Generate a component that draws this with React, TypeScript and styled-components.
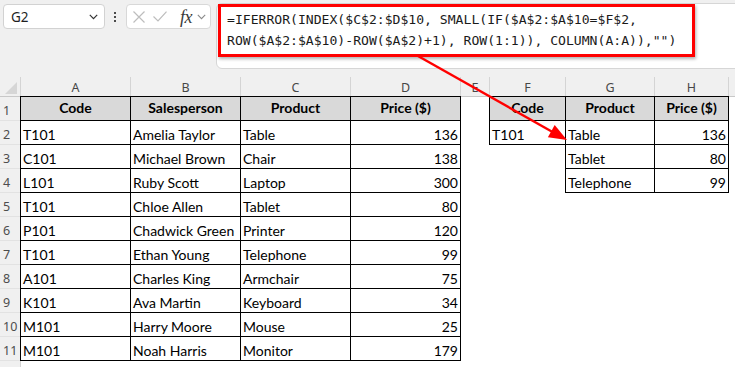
import React from "react";
import styled, { createGlobalStyle } from "styled-components";

const GlobalStyle = createGlobalStyle`
  html, body { margin: 0; padding: 0; background: #ffffff; }
  body { overflow: hidden; }
`;

const Page = styled.div`
  position: relative;
  width: 735px;
  height: 367px;
  overflow: hidden;
  background: #ffffff;
`;

/* ---------- formula bar ---------- */

const FormulaBar = styled.div`
  display: flex;
  align-items: flex-start;
  height: 77px;
  box-sizing: border-box;
  padding: 3px 0 0 3px;
  background: #f0f0f0;
`;

const NameBox = styled.div`
  display: flex;
  align-items: center;
  justify-content: space-between;
  box-sizing: border-box;
  width: 102px;
  height: 25px;
  margin-top: 1px;
  padding: 0 6px 0 7px;
  background: #ffffff;
  border: 1px solid #d2d2d2;
  border-radius: 4px;
  font: 13.5px "Noto Sans", sans-serif;
  color: #1f1f1f;
`;

const VDots = styled.div`
  display: flex;
  flex-direction: column;
  gap: 2px;
  margin: 9px 10px 0 9px;
`;

const Dot = styled.span`
  width: 2px;
  height: 2px;
  background: #4a4a4a;
`;

const FxBox = styled.div`
  display: flex;
  align-items: center;
  box-sizing: border-box;
  width: 85px;
  height: 25px;
  margin-top: 1px;
  padding-left: 6px;
  background: #ffffff;
  border: 1px solid #d8d8d8;
  border-radius: 4px;
`;

const ToolIcon = styled.svg<{ $ml?: number }>`
  display: block;
  flex: none;
  margin-left: ${(p) => p.$ml ?? 0}px;
`;

const FxLabel = styled.span<{ $ml?: number }>`
  margin-left: ${(p) => p.$ml ?? 0}px;
  font: italic 18px "Liberation Serif", serif;
  color: #3a3a3a;
  line-height: 1;
  letter-spacing: -0.5px;
`;

const FormulaBox = styled.div`
  flex: 1;
  box-sizing: border-box;
  height: 66px;
  margin: 0 -12px 0 5px;
  padding: 0 0 0 1px;
  background: #ffffff;
  border: 1px solid #d6d6d6;
  border-radius: 6px;
`;

const RedFrame = styled.div`
  box-sizing: border-box;
  width: 477px;
  height: 53px;
  padding: 2px 0 0 6px;
  border: 3px solid #ff0000;
  box-shadow: 1px 2px 3px rgba(0, 0, 0, 0.3);
  font: 13.1px "DejaVu Sans Mono", "Liberation Mono", monospace;
  line-height: 21px;
  color: #1a1a1a;
  white-space: pre;
`;

const FormulaLine = styled.div``;

/* ---------- worksheet ---------- */

const Sheet = styled.div`
  display: grid;
  grid-template-columns: 21px 110px 110px 110px 110px 29px 76px 89px 74px 1fr;
  grid-template-rows: 20px repeat(12, 24px);
  background: #ffffff;
`;

const Corner = styled.div`
  display: flex;
  align-items: flex-end;
  justify-content: flex-end;
  box-sizing: border-box;
  padding: 0 3px 2px 0;
  background: #f0f0f0;
  border-right: 1px solid #d4d4d4;
  border-bottom: 1px solid #c8c8c8;
`;

const CornerMark = styled.span`
  width: 12px;
  height: 12px;
  background: #d6d6d6;
  clip-path: polygon(100% 0, 100% 100%, 0 100%);
`;

const ColHead = styled.div<{ $last?: boolean }>`
  display: flex;
  align-items: center;
  justify-content: center;
  box-sizing: border-box;
  padding-top: 1px;
  background: #f0f0f0;
  border-right: ${(p) => (p.$last ? "none" : "1px solid #d4d4d4")};
  border-bottom: 1px solid #c8c8c8;
  font: 12.5px "Noto Sans", sans-serif;
  color: #474747;
`;

const RowHead = styled.div`
  display: flex;
  align-items: center;
  box-sizing: border-box;
  padding: 3px 0 0 3px;
  background: #f0f0f0;
  border-right: 1px solid #d4d4d4;
  border-bottom: 1px solid #e2e2e2;
  font: 12.5px "Noto Sans", sans-serif;
  color: #4d4d4d;
`;

type Align = "left" | "right" | "center";

const Cell = styled.div<{ $boxed?: boolean; $head?: boolean; $align?: Align }>`
  display: flex;
  align-items: ${(p) => (p.$head ? "center" : "flex-end")};
  justify-content: ${(p) =>
    p.$align === "right" ? "flex-end" : p.$align === "center" ? "center" : "flex-start"};
  box-sizing: border-box;
  min-width: 0;
  padding: 0 2px 0 2px;
  overflow: hidden;
  white-space: nowrap;
  font-family: Lato, "Liberation Sans", sans-serif;
  font-size: 14px;
  line-height: 1.2;
  font-weight: ${(p) => (p.$head ? 700 : 400)};
  color: #000000;
  background: ${(p) => (p.$head ? "#d9d9d9" : "transparent")};
  ${(p) => (p.$boxed ? `border: 1px solid #000000; margin: -1px 0 0 -1px;` : ``)}
`;

const Overlay = styled.svg`
  position: absolute;
  left: 0;
  top: 0;
  pointer-events: none;
`;

/* ---------- data ---------- */

type Sale = { code: string; person: string; product: string; price: number };

const sales: Sale[] = [
  { code: "T101", person: "Amelia Taylor", product: "Table", price: 136 },
  { code: "C101", person: "Michael Brown", product: "Chair", price: 138 },
  { code: "L101", person: "Ruby Scott", product: "Laptop", price: 300 },
  { code: "T101", person: "Chloe Allen", product: "Tablet", price: 80 },
  { code: "P101", person: "Chadwick Green", product: "Printer", price: 120 },
  { code: "T101", person: "Ethan Young", product: "Telephone", price: 99 },
  { code: "A101", person: "Charles King", product: "Armchair", price: 75 },
  { code: "K101", person: "Ava Martin", product: "Keyboard", price: 34 },
  { code: "M101", person: "Harry Moore", product: "Mouse", price: 25 },
  { code: "M101", person: "Noah Harris", product: "Monitor", price: 179 },
];

type Lookup = { code?: string; product: string; price: number };

const results: Lookup[] = [
  { code: "T101", product: "Table", price: 136 },
  { product: "Tablet", price: 80 },
  { product: "Telephone", price: 99 },
];

const columns = ["A", "B", "C", "D", "E", "F", "G", "H"];

function ResultCells({ row }: { row: number }) {
  // row is the worksheet row number (1-based)
  if (row === 1) {
    return (
      <>
        <Cell $boxed $head $align="center">Code</Cell>
        <Cell $boxed $head $align="center">Product</Cell>
        <Cell $boxed $head $align="center">Price ($)</Cell>
      </>
    );
  }
  const r = results[row - 2];
  if (!r) {
    return (
      <>
        <Cell />
        <Cell />
        <Cell />
      </>
    );
  }
  return (
    <>
      {r.code ? <Cell $boxed>{r.code}</Cell> : <Cell />}
      <Cell $boxed>{r.product}</Cell>
      <Cell $boxed $align="right">{r.price}</Cell>
    </>
  );
}

export default function App() {
  const rows = Array.from({ length: 12 }, (_, i) => i + 1);

  return (
    <Page>
      <GlobalStyle />
      <FormulaBar>
        <NameBox>
          <span>G2</span>
          <svg width="9" height="6" viewBox="0 0 9 6">
            <path d="M0.8 0.8 L4.5 4.6 L8.2 0.8" fill="none" stroke="#333" strokeWidth="1.2" />
          </svg>
        </NameBox>
        <VDots>
          <Dot />
          <Dot />
          <Dot />
        </VDots>
        <FxBox>
          <ToolIcon width="12" height="12" viewBox="0 0 12 12">
            <path d="M0.5 0.5 L11.5 11.5 M11.5 0.5 L0.5 11.5" stroke="#bdbdbd" strokeWidth="1.2" />
          </ToolIcon>
          <ToolIcon $ml={8} width="14" height="11" viewBox="0 0 14 11">
            <path d="M0.5 5.5 L5 10 L13.5 0.6" fill="none" stroke="#bdbdbd" strokeWidth="1.2" />
          </ToolIcon>
          <FxLabel $ml={13}>fx</FxLabel>
          <ToolIcon $ml={5} width="9" height="6" viewBox="0 0 9 6">
            <path d="M0.8 0.8 L4.5 4.6 L8.2 0.8" fill="none" stroke="#8a8a8a" strokeWidth="1.1" />
          </ToolIcon>
        </FxBox>
        <FormulaBox>
          <RedFrame>
            <FormulaLine>=IFERROR(INDEX($C$2:$D$10, SMALL(IF($A$2:$A$10=$F$2,</FormulaLine>
            <FormulaLine>ROW($A$2:$A$10)-ROW($A$2)+1), ROW(1:1)), COLUMN(A:A)),"")</FormulaLine>
          </RedFrame>
        </FormulaBox>
      </FormulaBar>

      <Sheet>
        <Corner>
          <CornerMark />
        </Corner>
        {columns.map((c) => (
          <ColHead key={c}>{c}</ColHead>
        ))}
        <ColHead $last />

        {rows.map((row) => {
          const sale = row >= 2 ? sales[row - 2] : undefined;
          return (
            <React.Fragment key={row}>
              {/* row 12 sits below the visible area; its number falls outside */}
              <RowHead>{row <= 11 ? row : null}</RowHead>
              {row === 1 ? (
                <>
                  <Cell $boxed $head $align="center">Code</Cell>
                  <Cell $boxed $head $align="center">Salesperson</Cell>
                  <Cell $boxed $head $align="center">Product</Cell>
                  <Cell $boxed $head $align="center">Price ($)</Cell>
                </>
              ) : sale ? (
                <>
                  <Cell $boxed>{sale.code}</Cell>
                  <Cell $boxed>{sale.person}</Cell>
                  <Cell $boxed>{sale.product}</Cell>
                  <Cell $boxed $align="right">{sale.price}</Cell>
                </>
              ) : (
                <>
                  <Cell />
                  <Cell />
                  <Cell />
                  <Cell />
                </>
              )}
              <Cell />
              <ResultCells row={row} />
              <Cell />
            </React.Fragment>
          );
        })}
      </Sheet>

      {/* pointer from the formula to the first result cell */}
      <Overlay width="735" height="367" viewBox="0 0 735 367">
        <line x1="418" y1="56" x2="553" y2="132.2" stroke="#ff0000" strokeWidth="2.4" />
        <polygon points="567,140 547.9,137.3 554.7,125.1" fill="#ff0000" />
      </Overlay>
    </Page>
  );
}
